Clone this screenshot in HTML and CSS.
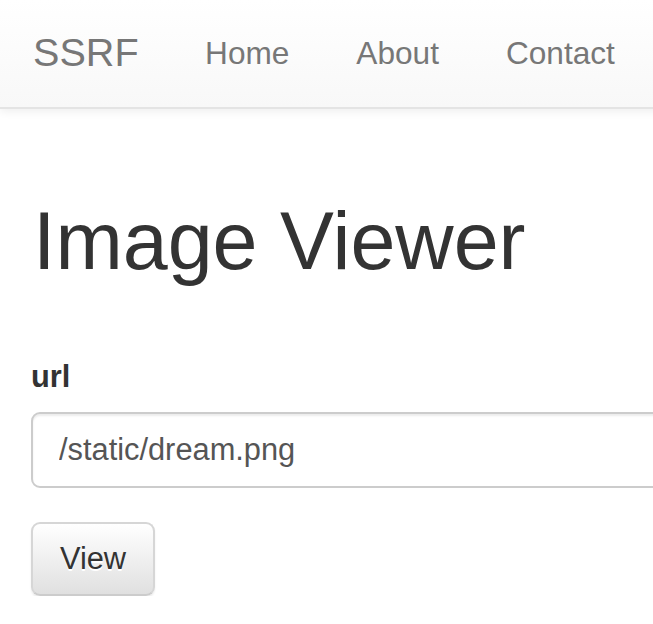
FILE: index.html
```html
<!DOCTYPE html>
<html lang="en">
<head>
<meta charset="utf-8">
<title>SSRF</title>
<link rel="stylesheet" href="styles.css">
</head>
<body>
<nav class="navbar">
  <a class="brand" href="#">SSRF</a>
  <ul class="nav">
    <li><a href="#">Home</a></li>
    <li><a href="#">About</a></li>
    <li><a href="#">Contact</a></li>
  </ul>
</nav>
<main class="container">
  <h1 class="title">Image Viewer</h1>
  <form class="form">
    <div class="form-group">
      <label class="label" for="url">url</label>
      <input class="input" id="url" type="text" value="/static/dream.png">
    </div>
    <button class="btn" type="button">View</button>
  </form>
</main>
</body>
</html>
```

FILE: styles.css
```css
html, body {
  margin: 0;
  padding: 0;
  overflow: hidden;
  background: #fff;
}
body {
  font-family: "Liberation Sans", Arial, sans-serif;
  color: #333;
  width: 900px;
}
.navbar {
  display: flex;
  align-items: flex-start;
  height: 107px;
  border-bottom: 2px solid #e4e4e4;
  background: linear-gradient(to bottom, #fff 0, #f8f8f8 100%);
  box-shadow: 0 2px 9px rgba(0, 0, 0, 0.075);
}
.brand {
  display: block;
  padding: 30px 33px 0;
  font-size: 39.6px;
  line-height: 44px;
  color: #777;
  text-decoration: none;
}
.nav {
  display: flex;
  margin: 0;
  padding: 0;
  list-style: none;
}
.nav a {
  display: block;
  padding: 31px 33.5px 0;
  font-size: 31.6px;
  line-height: 44px;
  color: #777;
  text-decoration: none;
}
.container {
  padding: 0 31px;
}
.title {
  margin: 88px 0 0 2px;
  font-size: 80.8px;
  font-weight: 500;
  line-height: 88px;
  color: #333;
}
.form {
  margin-top: 70px;
}
.form-group {
  margin-bottom: 34px;
}
.label {
  display: block;
  margin-bottom: 13px;
  font-size: 30.8px;
  font-weight: bold;
  line-height: 44px;
}
.input {
  display: block;
  box-sizing: border-box;
  width: 760px;
  height: 76px;
  padding: 0 26px;
  border: 2px solid #ccc;
  border-radius: 9px;
  font-family: inherit;
  font-size: 30.8px;
  color: #555;
  background: #fff;
  box-shadow: inset 0 2px 2px rgba(0, 0, 0, 0.075);
  outline: none;
}
.btn {
  display: block;
  box-sizing: border-box;
  width: 124px;
  height: 74px;
  padding: 0;
  border: 2px solid #d6d6d6;
  border-bottom-color: #ccc;
  border-radius: 9px;
  font-family: inherit;
  font-size: 30.8px;
  color: #333;
  text-shadow: 0 2px 0 #fff;
  background: linear-gradient(to bottom, #fff 0, #e0e0e0 100%);
  box-shadow: 0 2px 2px rgba(0, 0, 0, 0.075);
}
```
